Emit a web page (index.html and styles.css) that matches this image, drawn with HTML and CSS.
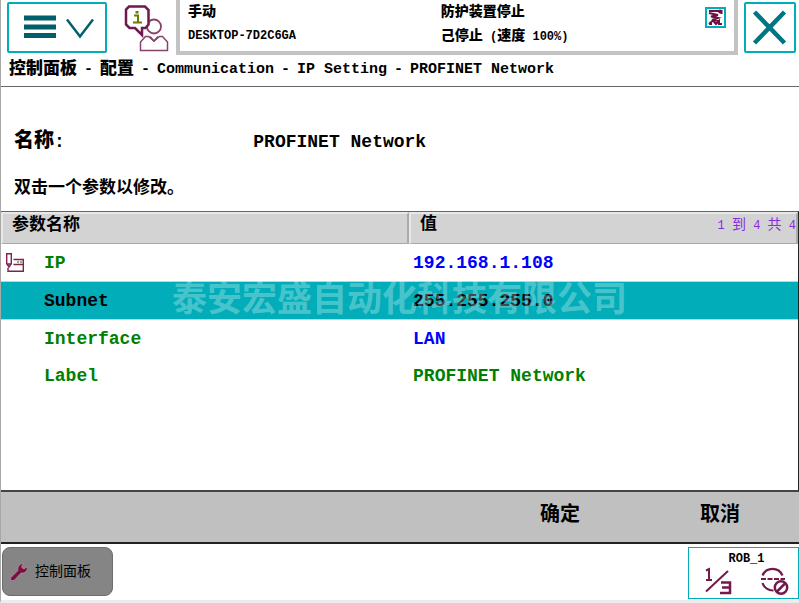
FILE: index.html
```html
<!DOCTYPE html>
<html lang="zh-CN">
<head>
<meta charset="utf-8">
<meta name="viewport" content="width=device-width, initial-scale=1">
<title>PROFINET Network</title>
<link rel="stylesheet" href="styles.css">
</head>
<body>
<div class="app">
  <header class="topbar">
    <button class="tile menu-btn" type="button" aria-label="菜单">
      <svg width="96" height="47" viewBox="0 0 96 47" aria-hidden="true">
        <path d="M15 14h32M15 23h32M15 31.500h32" stroke="#005f6b" stroke-width="5" fill="none"/>
        <path d="M58 15.500l13 17 13-17" stroke="#00606c" stroke-width="2.500" fill="none"/>
      </svg>
    </button>
    <button class="operator-btn" type="button" aria-label="操作员信息">
      <svg width="48" height="48" viewBox="0 0 48 48" aria-hidden="true" fill="none" stroke="#6f1a4c">
        <circle cx="32" cy="22.500" r="7" stroke-width="1.800" stroke="#86446a"/>
        <path d="M18.500 46.500V38l5-5.500h3l5.500 4.500 5.500-4.500h3l5 5.500v8.500z" stroke-width="1.500" stroke="#86446a" fill="#fff"/>
        <path d="M28 32.500l4 4.500 4-4.500" stroke-width="1.500" stroke="#86446a"/>
        <path d="M7 2.500h16l3.500 3.500v14.500L23.500 24H20v7l-7-7H7.500L4 20.500V5.500z" stroke-width="2.500" fill="#fff"/>
        <path d="M12 11.500h4v7M11 18.500h9" stroke="#6c7a00" stroke-width="2"/>
        <rect x="13.500" y="7" width="3" height="2.500" fill="#6c7a00" stroke="none"/>
      </svg>
    </button>
    <div class="status">
      <div class="status-col status-mode"><span><b class="cjk">手动</b></span><span>DESKTOP-7D2C6GA</span></div>
      <div class="status-col"><span><b class="cjk">防护装置停止</b></span><span><b class="cjk">己停止</b> (<b class="cjk">速度</b> 100%)</span></div>
      <svg class="robot" width="21" height="21" viewBox="0 0 21 21" aria-hidden="true">
        <rect x="1" y="1" width="19" height="19" fill="#fff" stroke="#00adb8" stroke-width="2"/>
        <path d="M4 4h10M4 6l9 2-7 1.500 7 1.500-6 2 8 1M16.500 3v4M4 17l4-3.500 3 3.500 3-3v3.500M4 17h3M13 17h4" stroke="#6f1040" stroke-width="2" fill="none"/>
        <circle cx="15" cy="4.500" r="2" fill="#6f1040"/>
      </svg>
    </div>
    <button class="tile close-btn" type="button" aria-label="关闭">
      <svg width="48" height="47" viewBox="0 0 48 47" aria-hidden="true">
        <path d="M8.500 8l30 31M38.500 8l-30 31" stroke="#007682" stroke-width="4.500" fill="none"/>
      </svg>
    </button>
  </header>

  <nav class="crumbs" aria-label="路径">
    <b class="cjk">控制面板</b><i>-</i><b class="cjk">配置</b><i>-</i><span>Communication</span><i>-</i><span>IP Setting</span><i>-</i><span>PROFINET Network</span>
  </nav>

  <main class="editor">
    <div class="name-row"><span class="name-label"><b class="cjk">名称</b>:</span><span>PROFINET Network</span></div>
    <p class="hint">双击一个参数以修改。</p>
    <div class="params">
      <table>
        <colgroup><col class="col-name"><col></colgroup>
        <thead>
          <tr>
            <th scope="col">参数名称</th>
            <th scope="col"><div class="value-head"><span>值</span><span class="count">1 <span class="cjk">到</span> 4 <span class="cjk">共</span> 4</span></div></th>
          </tr>
        </thead>
        <tbody>
          <tr>
            <td><div class="param"><svg width="20" height="21" viewBox="0 0 20 21" aria-hidden="true" fill="none" stroke="#7b2452" stroke-width="1.400"><path d="M1.700 1.700h4.600v10L4 15l-2.300-3.300zM2 12h4M8.500 7.500h9.800v11.800H3v-3.500M8.500 12.500h9.500"/><path d="M12 10h2m1 0h2" stroke="#8d8740"/></svg><span>IP</span></div></td>
            <td class="changed">192.168.1.108</td>
          </tr>
          <tr class="selected"><td><div class="param"><span>Subnet</span></div></td><td>255.255.255.0</td></tr>
          <tr><td><div class="param"><span>Interface</span></div></td><td class="changed">LAN</td></tr>
          <tr><td><div class="param"><span>Label</span></div></td><td>PROFINET Network</td></tr>
        </tbody>
      </table>
      <div class="watermark">泰安宏盛自动化科技有限公司</div>
    </div>
  </main>

  <div class="actions">
    <button type="button">确定</button>
    <button type="button">取消</button>
  </div>

  <footer class="taskbar">
    <button class="task" type="button">
      <svg width="18" height="18" viewBox="0 0 18 18" aria-hidden="true"><path d="M.5 15l7.500-7.500c-.6-3 1-6.500 5-7l-1.500 3.500 2 2 4-2c0 4-3 6.500-6.500 6L4 17.500H1z" fill="#7a0f46" stroke="#c9a9b8" stroke-width=".5"/></svg>
      <span>控制面板</span>
    </button>
    <button class="rob" type="button">
      <span>ROB_1</span>
      <span class="rob-icons">
        <svg width="30" height="28" viewBox="0 0 30 28" aria-hidden="true" fill="none" stroke="#741a4b" stroke-width="2">
          <path d="M3 3.500l3-1.500v11M3 13h6"/>
          <path d="M3 24.500L25 4"/>
          <path d="M18 15.500h9v10.500h-10M19 20.500h8" stroke-width="2.500"/>
        </svg>
        <svg width="30" height="28" viewBox="0 0 30 28" aria-hidden="true" fill="none" stroke="#741a4b">
          <path d="M2.500 8.500a10.800 10.800 0 0 1 20 0M2.500 16a11 11 0 0 0 11 7.500" stroke-width="2.200"/>
          <path d="M1 12h24" stroke-width="2.200" stroke-dasharray="5 1.500"/>
          <circle cx="21" cy="20.500" r="6.200" stroke-width="2.500" fill="#fff"/>
          <path d="M16.500 25l9-9" stroke-width="2.500"/>
        </svg>
      </span>
    </button>
  </footer>
</div>
</body>
</html>
```
FILE: styles.css
```css
* { box-sizing: border-box; }

body {
  margin: 0;
  background: #fff;
  color: #000;
  font: bold 18px/24px "Liberation Mono", "Noto Sans CJK SC", monospace;
}

button {
  margin: 0;
  padding: 0;
  border: 0;
  background: none;
  color: inherit;
  font: inherit;
}

svg { display: block; flex: none; }

.app {
  display: flex;
  flex-direction: column;
  min-height: 100vh;
  border-left: 1px solid #a8a8a8;
  border-bottom: 3px solid #ececec;
}

.topbar {
  display: flex;
  align-items: flex-start;
  padding: 0 3px 0 6px;
}

.tile {
  margin-top: 2px;
  border: 2px solid #00adb8;
  border-radius: 2px;
  background: #fff;
}

.operator-btn {
  margin: 4px 6px 0 15px;
}

.status {
  flex: 1;
  display: flex;
  align-items: flex-start;
  min-height: 55px;
  margin-right: 6px;
  padding: 0 8px;
  border: solid #c3c3c3;
  border-width: 0 4px 4px;
  font-size: 12px;
}

.status .cjk { font-size: 14px; }

.status-col {
  flex: 1;
  display: flex;
  flex-direction: column;
}

.status-mode { flex: 0 0 47%; }

.status-col span { height: 24px; white-space: nowrap; }

.robot { margin-top: 7px; }

.crumbs {
  display: flex;
  align-items: center;
  height: 32px;
  padding: 0 8px 2px;
  border-bottom: 1px solid #666;
  font-size: 15px;
  white-space: nowrap;
}

.crumbs .cjk { font-size: 17px; }

.crumbs i {
  width: 23px;
  font-style: normal;
  text-align: center;
}

.editor {
  flex: 1;
  display: flex;
  flex-direction: column;
}

.name-row {
  display: flex;
  align-items: center;
  padding: 43px 13px 0;
}

.name-label { flex: 0 0 31%; }

.name-label .cjk { font-size: 20px; }

.hint {
  margin: 23px 13px 10px;
  font-size: 17px;
}

.params {
  position: relative;
  flex: 1;
  border-top: 1px solid #666;
  border-right: 1px solid #222;
}

table {
  width: 100%;
  border-collapse: separate;
  border-spacing: 0;
  table-layout: fixed;
}

.col-name { width: 51.2%; }

th {
  height: 31px;
  padding: 0 0 6px 9px;
  border: solid #aaa;
  border-width: 2px 2px 1px;
  border-top-color: #e8e8e8;
  border-left-color: #e8e8e8;
  background: #d3d3d3;
  font-size: 17px;
  line-height: 22px;
  text-align: left;
}

.value-head {
  display: flex;
  justify-content: space-between;
}

.count {
  color: #8a2be2;
  font-size: 12px;
  font-weight: normal;
}

.count .cjk { font-size: 14px; }

td {
  height: 37px;
  padding: 0 0 0 4px;
  color: #008000;
}

.param {
  display: grid;
  grid-template-columns: 39px 1fr;
  align-items: center;
}

.param span { grid-column: 2; }

.changed { color: #00f; }

.selected td {
  height: 39px;
  border: solid #a6e0e4;
  border-width: 1px 0;
  background: #00adb8;
  color: #000;
}

.watermark {
  position: absolute;
  top: 66px;
  left: 0;
  right: 0;
  color: rgba(255, 255, 255, 0.3);
  font-size: 35px;
  line-height: 48px;
  text-align: center;
  white-space: nowrap;
  pointer-events: none;
}

.actions {
  display: flex;
  justify-content: flex-end;
  gap: 80px;
  padding: 12px 39px 14px;
  border-top: 2px solid #444;
  border-bottom: 2px solid #222;
  background: #c0c0c0;
}

.actions button { width: 80px; font-size: 20px; }

.taskbar {
  display: flex;
  justify-content: space-between;
  align-items: flex-start;
  padding: 3px 0 1px 1px;
}

.task {
  display: flex;
  align-items: center;
  gap: 7px;
  width: 111px;
  height: 49px;
  padding-left: 7px;
  border: 1px solid #6d6d6d;
  border-radius: 8px;
  background: #858585;
  font-size: 14px;
  font-weight: normal;
}

.rob {
  width: 111px;
  padding: 3px 8px 1px 14px;
  border: 1px solid #00adb8;
  background: #fff;
  font-size: 12px;
  line-height: 16px;
}

.rob-icons {
  display: flex;
  justify-content: space-between;
  height: 30px;
}
```
